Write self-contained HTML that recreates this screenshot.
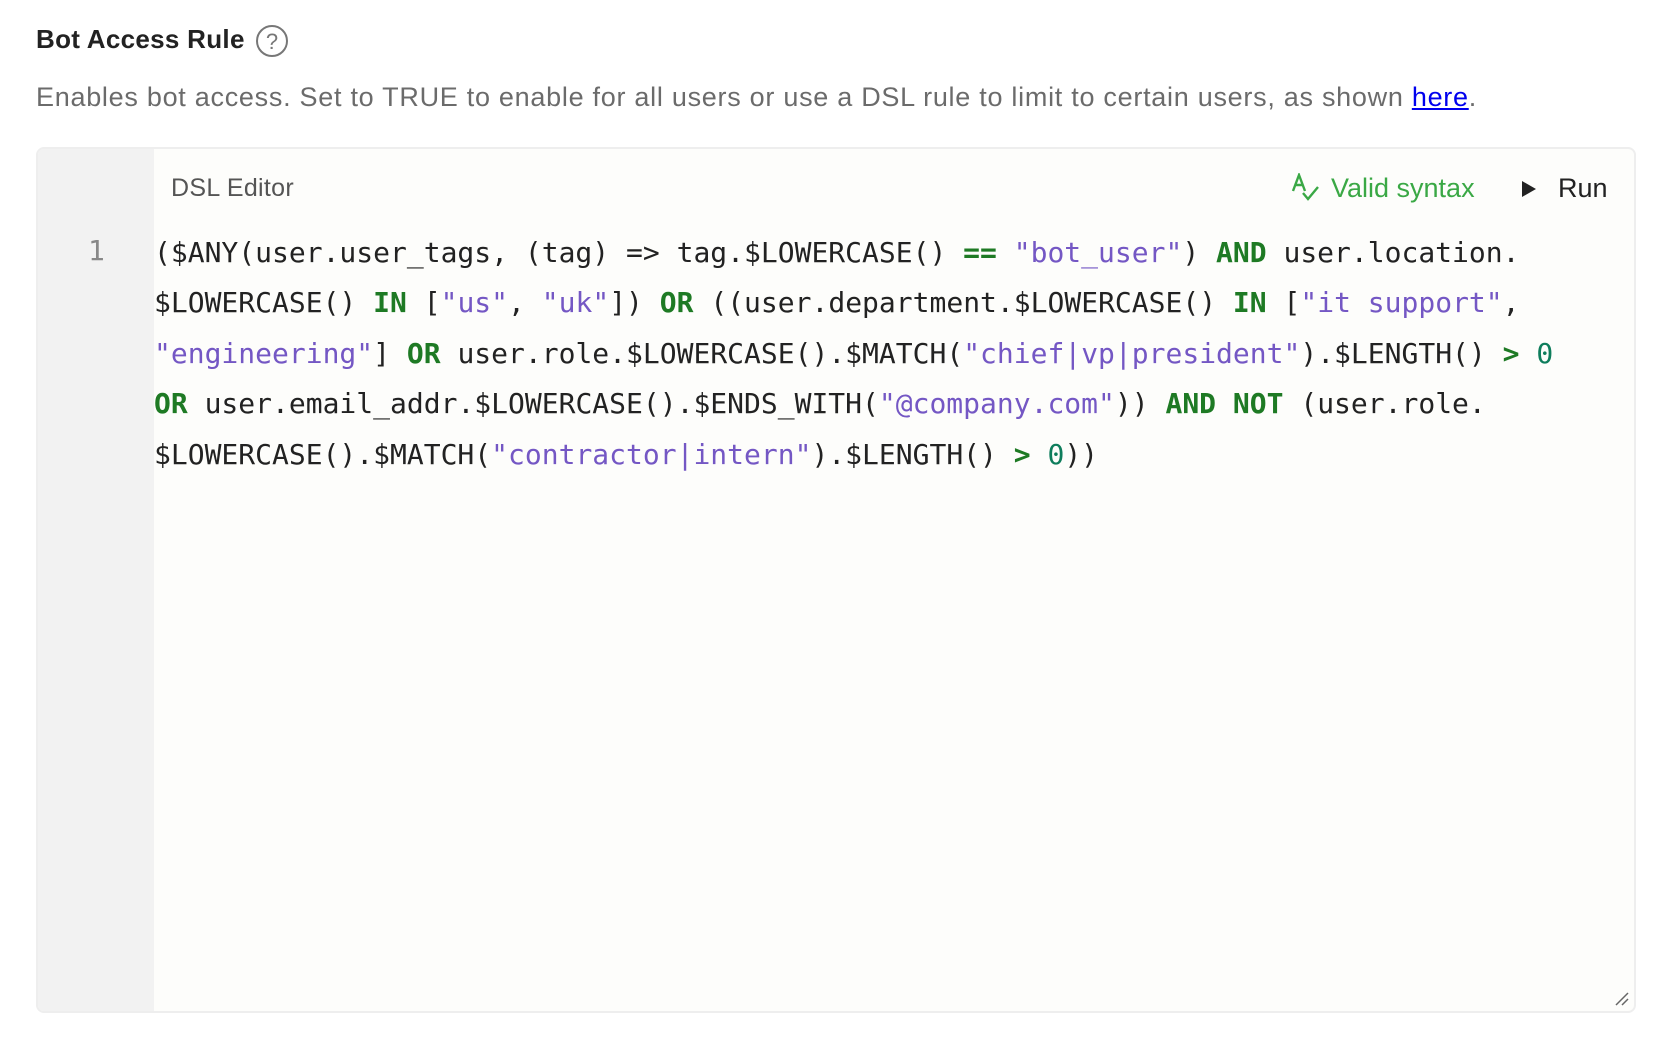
<!DOCTYPE html>
<html><head><meta charset="utf-8"><style>
body{margin:0;background:#fff;width:1674px;height:1044px;position:relative;font-family:"Liberation Sans",sans-serif;overflow:hidden}
.t{position:absolute;left:36px;top:24px;font-size:26px;font-weight:bold;color:#222;letter-spacing:0.3px}
.q{position:absolute;left:256px;top:25px;width:28px;height:28px;border:2.5px solid #777;border-radius:50%;color:#777;font-size:22px;text-align:center;line-height:29px}
.d{position:absolute;left:36px;top:82px;font-size:27px;color:#6b6b6b;white-space:nowrap;letter-spacing:0.72px}
.d a{color:#0000ee;text-decoration:underline}
.box{position:absolute;left:36px;top:147px;width:1596px;height:862px;border:2px solid #eee;border-radius:8px;background:#fdfdfb;overflow:hidden}
.g{position:absolute;left:0;top:0;width:116px;height:100%;background:#f2f2f2}
.h{position:absolute;left:133px;top:25px;font-size:25px;color:#555;letter-spacing:0.3px}
.v{position:absolute;left:1253px;top:24px;font-size:27px;color:#3aa845;white-space:nowrap}
.r{position:absolute;left:1482px;top:24px;font-size:27px;color:#222;white-space:nowrap}
.ln{position:absolute;left:50px;top:85px;font:28px "DejaVu Sans Mono",monospace;color:#888}
pre{position:absolute;left:116px;top:79px;margin:0;font:28px/50.4px "DejaVu Sans Mono","Liberation Mono",monospace;color:#222}
.k{color:#1e7a24;font-weight:bold}.s{color:#7457c4}.n{color:#0e7d5c}
</style></head><body>
<div class="t">Bot Access Rule</div><div class="q">?</div>
<div class="d">Enables bot access. Set to TRUE to enable for all users or use a DSL rule to limit to certain users, as shown <a>here</a>.</div>
<div class="box"><div class="g"></div>
<div class="h">DSL Editor</div>
<div class="v"><svg width="30" height="28" viewBox="0 0 30 28" style="vertical-align:-4px;margin-right:10px"><path d="M2 18 L8 2 L14 18 M4.5 12 H11.5" stroke="#3aa845" stroke-width="2.4" fill="none"/><path d="M12 20 L17 26 L27 14" stroke="#3aa845" stroke-width="2.4" fill="none"/></svg>Valid syntax</div>
<div class="r"><svg width="18" height="20" viewBox="0 0 18 20" style="vertical-align:-2px;margin-right:20px"><path d="M2 2 L16 10 L2 18Z" fill="#222"/></svg>Run</div>
<div class="ln">1</div>
<pre>($ANY(user.user_tags, (tag) =&gt; tag.$LOWERCASE() <span class="k">==</span> <span class="s">"bot_user"</span>) <span class="k">AND</span> user.location.
$LOWERCASE() <span class="k">IN</span> [<span class="s">"us"</span>, <span class="s">"uk"</span>]) <span class="k">OR</span> ((user.department.$LOWERCASE() <span class="k">IN</span> [<span class="s">"it support"</span>,
<span class="s">"engineering"</span>] <span class="k">OR</span> user.role.$LOWERCASE().$MATCH(<span class="s">"chief|vp|president"</span>).$LENGTH() <span class="k">&gt;</span> <span class="n">0</span>
<span class="k">OR</span> user.email_addr.$LOWERCASE().$ENDS_WITH(<span class="s">"@company.com"</span>)) <span class="k">AND</span> <span class="k">NOT</span> (user.role.
$LOWERCASE().$MATCH(<span class="s">"contractor|intern"</span>).$LENGTH() <span class="k">&gt;</span> <span class="n">0</span>))</pre>
<svg width="16" height="16" style="position:absolute;right:4px;bottom:4px"><path d="M2 14 L14 2 M8 14 L14 8" stroke="#666" stroke-width="1.5"/></svg>
</div>
</body></html>
